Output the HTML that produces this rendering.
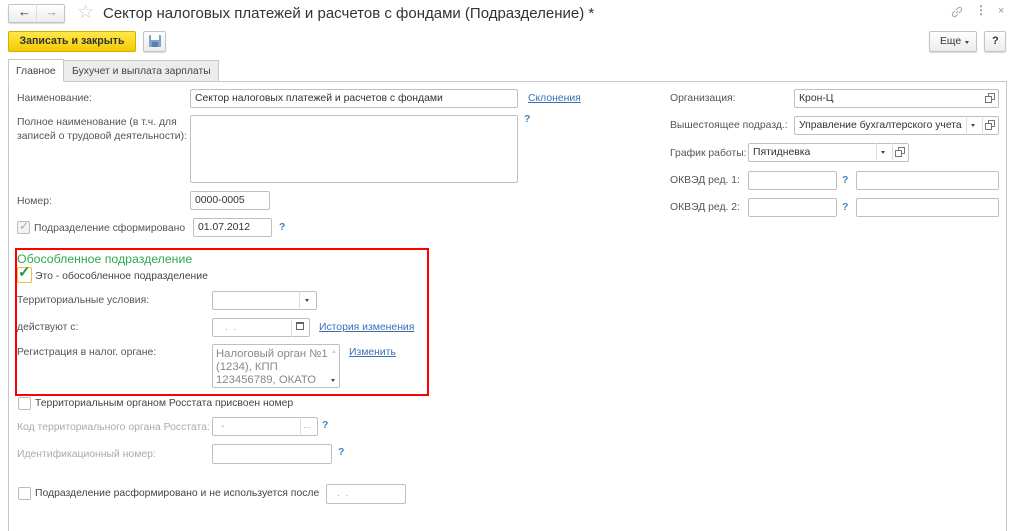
<!DOCTYPE html>
<html><head><meta charset="utf-8"><style>
*{box-sizing:border-box;margin:0;padding:0}
body{width:1024px;height:518px;background:#fff;font-family:"Liberation Sans",Arial,sans-serif;font-size:10.4px;color:#444;position:relative;overflow:hidden}
.a{position:absolute;white-space:nowrap}
.in{position:absolute;border:1px solid #bfbfbf;border-radius:2px;background:#fff;font-size:10.4px;color:#333;padding:3px 4px;line-height:12px;white-space:nowrap;overflow:hidden}
.lab{position:absolute;white-space:nowrap;color:#555;font-size:10.4px}
.gray{color:#aaa}
.q{position:absolute;color:#3a86c8;font-weight:bold;font-size:10.4px}
.lnk{position:absolute;color:#3a6fb5;text-decoration:underline;font-size:10.4px;white-space:nowrap}
.cb{position:absolute;width:13px;height:13px;border:1px solid #bbb;border-radius:2px;background:#fff}
.btn{position:absolute;border:1px solid #c4c4c4;border-radius:2px;background:linear-gradient(#fff,#ececec);box-shadow:0 1px 1px rgba(0,0,0,.15)}
.dd{position:absolute;width:0;height:0;border-left:2.5px solid transparent;border-right:2.5px solid transparent;border-top:3px solid #444}
.op{position:absolute;width:7px;height:7px;border:1px solid #777}
.op:after{content:"";position:absolute;left:-4px;top:2px;width:5px;height:5px;border:1px solid #777;background:#fff}
</style></head><body>
<div class="btn" style="left:8px;top:4px;width:57px;height:19px"></div>
<div class="a" style="left:18px;top:4px;font-size:13px;color:#333">&#8592;</div>
<div class="a" style="left:36px;top:4px;border-left:1px solid #ddd;height:17px"></div>
<div class="a" style="left:45px;top:4px;font-size:13px;color:#999">&#8594;</div>
<div class="a" style="left:77px;top:1px;font-size:19px;color:#ccc">&#9734;</div>
<div class="a" style="left:103px;top:5px;font-size:15px;color:#333">Сектор налоговых платежей и расчетов с фондами (Подразделение) *</div>
<svg class="a" style="left:950px;top:5px" width="14" height="14" viewBox="0 0 14 14" fill="none" stroke="#aaa" stroke-width="1.2"><path d="M6 8 L8 6 M5 6 L3 8 a2 2 0 0 0 3 3 L8 9 M9 8 L11 6 a2 2 0 0 0 -3 -3 L6 5"/></svg>
<div class="a" style="left:975px;top:3px;font-size:12px;color:#999;font-weight:bold">&#8942;</div>
<div class="a" style="left:998px;top:5px;font-size:11px;color:#999">&#215;</div>

<div class="a" style="left:8px;top:31px;width:128px;height:21px;background:linear-gradient(#ffe74a,#f2cc00);border:1px solid #d2ae00;border-radius:2px;font-size:10.6px;font-weight:bold;color:#333;text-align:center;line-height:19px">Записать и закрыть</div>
<div class="btn" style="left:143px;top:31px;width:23px;height:21px"></div>
<div class="a" style="left:149px;top:35px;width:12px;height:12px;background:#7aa3d0;border-radius:1px"><div style="position:absolute;left:2px;top:0;width:8px;height:5px;background:#fff"></div><div style="position:absolute;left:3px;top:7px;width:6px;height:5px;background:#5a7fa8"></div></div>
<div class="btn" style="left:929px;top:31px;width:48px;height:21px"></div>
<div class="a" style="left:940px;top:36px;color:#333">Еще</div>
<div class="dd" style="left:965px;top:41px"></div>
<div class="btn" style="left:984px;top:31px;width:22px;height:21px"></div>
<div class="a" style="left:992px;top:35px;color:#333;font-weight:bold;font-size:11px">?</div>

<div class="a" style="left:63px;top:60px;width:156px;height:22px;background:#ececec;border:1px solid #c8c8c8;border-bottom:none"></div>
<div class="a" style="left:72px;top:66px;color:#444">Бухучет и выплата зарплаты</div>
<div class="a" style="left:8px;top:81px;width:999px;height:450px;border:1px solid #c8c8c8;border-bottom:none"></div>
<div class="a" style="left:8px;top:59px;width:56px;height:23px;background:#fff;border:1px solid #c8c8c8;border-bottom:1px solid #fff"></div>
<div class="a" style="left:16px;top:66px;color:#444">Главное</div>

<div class="lab" style="left:17px;top:93px">Наименование:</div>
<div class="in" style="left:190px;top:89px;width:328px;height:19px">Сектор налоговых платежей и расчетов с фондами</div>
<div class="lnk" style="left:528px;top:93px">Склонения</div>
<div class="lab" style="left:17px;top:116px;line-height:14px">Полное наименование (в т.ч. для<br>записей о трудовой деятельности):</div>
<div class="in" style="left:190px;top:115px;width:328px;height:68px"></div>
<div class="q" style="left:524px;top:114px">?</div>
<div class="lab" style="left:17px;top:196px">Номер:</div>
<div class="in" style="left:190px;top:191px;width:80px;height:19px">0000-0005</div>
<div class="cb" style="left:17px;top:221px;background:#f3f3f3"></div>
<div class="a" style="left:19px;top:219px;color:#aaa;font-size:12px">&#10003;</div>
<div class="lab" style="left:34px;top:223px">Подразделение сформировано</div>
<div class="in" style="left:193px;top:218px;width:79px;height:19px">01.07.2012</div>
<div class="q" style="left:279px;top:222px">?</div>

<div class="a" style="left:15px;top:248px;width:414px;height:148px;border:2px solid #f00"></div>
<div class="a" style="left:17px;top:252px;color:#2fa84f;font-size:12.3px">Обособленное подразделение</div>
<div class="cb" style="left:17px;top:267px;width:15px;height:16px;border-color:#e8c43a"></div>
<div class="a" style="left:18px;top:263px;color:#1a9a3a;font-size:15px;font-weight:bold">&#10003;</div>
<div class="lab" style="left:35px;top:271px;color:#444">Это - обособленное подразделение</div>
<div class="lab" style="left:17px;top:295px">Территориальные условия:</div>
<div class="in" style="left:212px;top:291px;width:105px;height:19px"></div>
<div class="a" style="left:299px;top:291px;height:19px;border-left:1px solid #ddd"></div>
<div class="dd" style="left:305px;top:299px"></div>
<div class="lab" style="left:17px;top:322px">действуют с:</div>
<div class="in" style="left:212px;top:318px;width:98px;height:19px;color:#aaa;padding-left:12px">.&nbsp;&nbsp;.</div>
<div class="a" style="left:291px;top:318px;height:19px;border-left:1px solid #ddd"></div>
<div class="a" style="left:296px;top:322px;width:8px;height:8px;border:1px solid #666;border-top-width:2px"></div>
<div class="lnk" style="left:319px;top:322px">История изменения</div>
<div class="lab" style="left:17px;top:347px">Регистрация в налог. органе:</div>
<div class="in" style="left:212px;top:344px;width:128px;height:44px;color:#888;font-size:11.3px;line-height:13px;padding:3px 3px;white-space:normal">Налоговый орган №1 (1234), КПП 123456789, ОКАТО</div>
<div class="a" style="left:331px;top:349px;font-size:6px;color:#ccc">&#9650;</div>
<div class="dd" style="left:331px;top:379px"></div>
<div class="lnk" style="left:349px;top:347px">Изменить</div>

<div class="cb" style="left:18px;top:397px"></div>
<div class="lab" style="left:35px;top:398px;color:#444">Территориальным органом Росстата присвоен номер</div>
<div class="lab gray" style="left:17px;top:422px">Код территориального органа Росстата:</div>
<div class="in" style="left:212px;top:417px;width:106px;height:19px;color:#aaa;padding-left:8px">-</div>
<div class="a" style="left:300px;top:417px;height:19px;border-left:1px solid #ddd"></div>
<div class="a" style="left:303px;top:420px;color:#aaa;font-size:9px">...</div>
<div class="q" style="left:322px;top:420px">?</div>
<div class="lab gray" style="left:17px;top:449px">Идентификационный номер:</div>
<div class="in" style="left:212px;top:444px;width:120px;height:20px"></div>
<div class="q" style="left:338px;top:447px">?</div>
<div class="cb" style="left:18px;top:487px"></div>
<div class="lab" style="left:35px;top:488px;color:#444">Подразделение расформировано и не используется после</div>
<div class="in" style="left:326px;top:484px;width:80px;height:20px;color:#aaa;padding-left:10px">.&nbsp;&nbsp;.</div>

<div class="lab" style="left:670px;top:93px">Организация:</div>
<div class="in" style="left:794px;top:89px;width:205px;height:19px">Крон-Ц</div>
<div class="op" style="left:988px;top:93px"></div>
<div class="lab" style="left:670px;top:120px">Вышестоящее подразд.:</div>
<div class="in" style="left:794px;top:116px;width:205px;height:19px">Управление бухгалтерского учета</div>
<div class="a" style="left:966px;top:116px;height:19px;border-left:1px solid #ddd"></div>
<div class="dd" style="left:971px;top:124px"></div>
<div class="a" style="left:982px;top:116px;height:19px;border-left:1px solid #ddd"></div>
<div class="op" style="left:988px;top:120px"></div>
<div class="lab" style="left:670px;top:148px">График работы:</div>
<div class="in" style="left:748px;top:143px;width:161px;height:19px">Пятидневка</div>
<div class="a" style="left:876px;top:143px;height:19px;border-left:1px solid #ddd"></div>
<div class="dd" style="left:881px;top:151px"></div>
<div class="a" style="left:892px;top:143px;height:19px;border-left:1px solid #ddd"></div>
<div class="op" style="left:898px;top:147px"></div>
<div class="lab" style="left:670px;top:175px">ОКВЭД ред. 1:</div>
<div class="in" style="left:748px;top:171px;width:89px;height:19px"></div>
<div class="q" style="left:842px;top:175px">?</div>
<div class="in" style="left:856px;top:171px;width:143px;height:19px"></div>
<div class="lab" style="left:670px;top:202px">ОКВЭД ред. 2:</div>
<div class="in" style="left:748px;top:198px;width:89px;height:19px"></div>
<div class="q" style="left:842px;top:202px">?</div>
<div class="in" style="left:856px;top:198px;width:143px;height:19px"></div>
</body></html>
